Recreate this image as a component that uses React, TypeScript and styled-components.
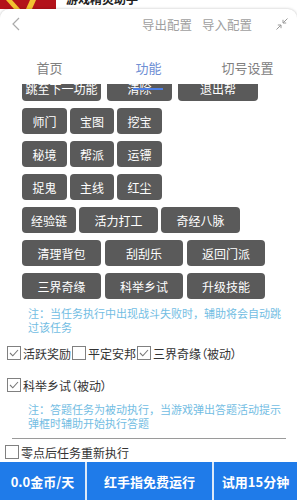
import React, { useLayoutEffect, useRef } from "react";
import styled, { createGlobalStyle } from "styled-components";

const GlobalStyle = createGlobalStyle`
    html, body {
        margin: 0;
        padding: 0;
        background: #fff;
        font-family: "Noto Sans CJK SC", "Noto Sans", sans-serif;
    }
    #root {
        height: 500px;
    }
`

type Btn = { label: string; width: number };
type Row = { gap: number; items: Btn[] };

const rows: Row[] = [
    { gap: 6, items: [{ label: "跳至下一功能", width: 79 }, { label: "清除", width: 65 }, { label: "退出帮", width: 80 }] },
    { gap: 3, items: [{ label: "师门", width: 45 }, { label: "宝图", width: 44 }, { label: "挖宝", width: 45 }] },
    { gap: 3, items: [{ label: "秘境", width: 45 }, { label: "帮派", width: 44 }, { label: "运镖", width: 45 }] },
    { gap: 3, items: [{ label: "捉鬼", width: 45 }, { label: "主线", width: 44 }, { label: "红尘", width: 45 }] },
    { gap: 3, items: [{ label: "经验链", width: 54 }, { label: "活力打工", width: 79 }, { label: "奇经八脉", width: 79 }] },
    { gap: 4, items: [{ label: "清理背包", width: 79 }, { label: "刮刮乐", width: 78 }, { label: "返回门派", width: 78 }] },
    { gap: 4, items: [{ label: "三界奇缘", width: 79 }, { label: "科举乡试", width: 78 }, { label: "升级技能", width: 78 }] },
];

export default function App() {
    const scrollRef = useRef<HTMLDivElement>(null);

    // the list is shown scrolled a little, so the first row sits under the tabs
    useLayoutEffect(() => {
        if (scrollRef.current) scrollRef.current.scrollTop = 10;
    }, []);

    return (
        <>
            <GlobalStyle />
            <Page>
                <TopStrip>
                    <Logo width="56" height="9" viewBox="0 0 56 9">
                        <rect width="56" height="9" fill="#b3121a" />
                        <path d="M6 0 L14 9 L20 9 L12 0 Z" fill="#f2c230" />
                        <path d="M30 0 L26 9 L32 9 L36 0 Z" fill="#f2c230" />
                    </Logo>
                    <AppName>游戏精灵助手</AppName>
                </TopStrip>
                <Card>
                    <Header>
                        <BackIcon width="8" height="14" viewBox="0 0 8 14">
                            <polyline points="7,1 1,7 7,13" fill="none" stroke="#aaa" strokeWidth="1.2" />
                        </BackIcon>
                        <Spacer />
                        <HeaderLink>导出配置</HeaderLink>
                        <HeaderLink>导入配置</HeaderLink>
                        <CollapseIcon width="12" height="12" viewBox="0 0 12 12">
                            <g fill="none" stroke="#999" strokeWidth="1">
                                <line x1="11.5" y1="0.5" x2="7" y2="5" />
                                <polyline points="7,1.8 7,5 10.2,5" />
                                <line x1="0.5" y1="11.5" x2="5" y2="7" />
                                <polyline points="1.8,7 5,7 5,10.2" />
                            </g>
                        </CollapseIcon>
                    </Header>
                    <Tabs>
                        <Tab>首页</Tab>
                        <Tab $active>功能</Tab>
                        <Tab>切号设置</Tab>
                    </Tabs>
                    <Scroll ref={scrollRef}>
                        <Grid>
                            {rows.map((row, i) => (
                                <ButtonRow key={i} $gap={row.gap}>
                                    {row.items.map((b) => (
                                        <TaskButton key={b.label} $width={b.width}>{b.label}</TaskButton>
                                    ))}
                                </ButtonRow>
                            ))}
                        </Grid>
                        <Note>注：当任务执行中出现战斗失败时，辅助将会自动跳过该任务</Note>
                        <CheckRow $top={9}>
                            <Check checked label="活跃奖励" />
                            <Check label="平定安邦" />
                            <Check checked label="三界奇缘（被动）" />
                        </CheckRow>
                        <CheckRow $top={12}>
                            <Check checked label="科举乡试（被动）" />
                        </CheckRow>
                        <Note>注：答题任务为被动执行，当游戏弹出答题活动提示弹框时辅助开始执行答题</Note>
                        <Divider />
                        <CheckRow $top={3} $left={5}>
                            <Check label="零点后任务重新执行" />
                        </CheckRow>
                    </Scroll>
                    <BottomBar>
                        <BarButton $width={85}>0.0金币/天</BarButton>
                        <BarButton $width={125}>红手指免费运行</BarButton>
                        <BarButton>试用15分钟</BarButton>
                    </BottomBar>
                </Card>
            </Page>
        </>
    );
}

const Check = ({ checked, label }: { checked?: boolean; label: string }) => (
    <CheckItem>
        <Box>
            {checked && (
                <svg width="10" height="8" viewBox="0 0 10 8">
                    <polyline points="1,4 3.8,6.8 9,1" fill="none" stroke="#777" strokeWidth="1.1" />
                </svg>
            )}
        </Box>
        <CheckLabel>{label}</CheckLabel>
    </CheckItem>
);

const Page = styled.div`
    height: 500px;
    display: flex;
    flex-direction: column;
    overflow: hidden;
    background: #fff;
`
const TopStrip = styled.div`
    height: 9px;
    flex-shrink: 0;
    display: flex;
    align-items: flex-end;
    overflow: hidden;
`
const Logo = styled.svg`
    display: block;
    flex-shrink: 0;
`
const AppName = styled.span`
    margin-left: 10px;
    padding-bottom: 4px;
    font-size: 12px;
    line-height: 12px;
    font-weight: 700;
    color: #222;
    white-space: nowrap;
`
const Card = styled.div`
    flex: 1;
    min-height: 0;
    display: flex;
    flex-direction: column;
    background: #fff;
    border-radius: 9px 9px 0 0;
    box-shadow: 0 0 3px rgba(0, 0, 0, 0.25);
`
const Header = styled.div`
    height: 30px;
    display: flex;
    align-items: center;
    padding: 0 9px 4px 12px;
    flex-shrink: 0;
`
const BackIcon = styled.svg`
    display: block;
`
const Spacer = styled.div`
    flex: 1;
`
const HeaderLink = styled.span`
    font-size: 12.5px;
    color: #a0a0a0;
    margin-right: 10px;
`
const CollapseIcon = styled.svg`
    display: block;
    margin-left: 14px;
`
const Tabs = styled.div`
    height: 41px;
    display: grid;
    grid-template-columns: repeat(3, 1fr);
    flex-shrink: 0;
    position: relative;
    z-index: 1;
`
const Tab = styled.div<{ $active?: boolean }>`
    position: relative;
    display: flex;
    justify-content: center;
    padding-top: 16px;
    font-size: 13px;
    line-height: 18px;
    color: ${(p) => (p.$active ? "#6f8fd4" : "#808080")};

    &::after {
        content: "";
        display: ${(p) => (p.$active ? "block" : "none")};
        position: absolute;
        bottom: -6px;
        left: 50%;
        margin-left: -16px;
        width: 30px;
        height: 2px;
        background: #4d7fe6;
    }
`
const Scroll = styled.div`
    flex: 1;
    min-height: 0;
    overflow: hidden;
`
const Grid = styled.div`
    display: flex;
    flex-direction: column;
    gap: 7px;
    padding-left: 22px;
`
const ButtonRow = styled.div<{ $gap: number }>`
    display: flex;
    gap: ${(p) => p.$gap}px;
`
const TaskButton = styled.div<{ $width: number }>`
    width: ${(p) => p.$width}px;
    height: 26px;
    display: flex;
    align-items: center;
    justify-content: center;
    background: #5a5a5a;
    border-radius: 4px;
    color: #fff;
    font-size: 12px;
    white-space: nowrap;
    overflow: hidden;
`
const Note = styled.div`
    margin-top: 8px;
    padding: 0 13px 0 28px;
    font-size: 11px;
    line-height: 13.5px;
    color: #72bde3;
`
const CheckRow = styled.div<{ $top: number; $left?: number }>`
    margin-top: ${(p) => p.$top}px;
    padding-left: ${(p) => p.$left ?? 7}px;
    height: 20px;
    display: flex;
    align-items: center;
    gap: 1px;
`
const CheckItem = styled.div`
    display: flex;
    align-items: center;
    gap: 2px;
`
const Box = styled.div`
    width: 12px;
    height: 12px;
    border: 1px solid #808080;
    display: flex;
    align-items: center;
    justify-content: center;
    background: #fff;
`
const CheckLabel = styled.span`
    font-size: 12px;
    color: #333;
    font-feature-settings: "palt";
    white-space: nowrap;
`
const Divider = styled.div`
    margin: 8px 11px 0 12px;
    height: 1px;
    background: #9a9a9a;
`
const BottomBar = styled.div`
    height: 38px;
    flex-shrink: 0;
    display: flex;
    gap: 2px;
    background: #dce9f8;
`
const BarButton = styled.div<{ $width?: number }>`
    ${(p) => (p.$width ? `width: ${p.$width}px;` : "flex: 1;")}
    display: flex;
    align-items: center;
    justify-content: center;
    background: #1f7be9;
    color: #fff;
    font-size: 13px;
    font-weight: 700;
    white-space: nowrap;
`
